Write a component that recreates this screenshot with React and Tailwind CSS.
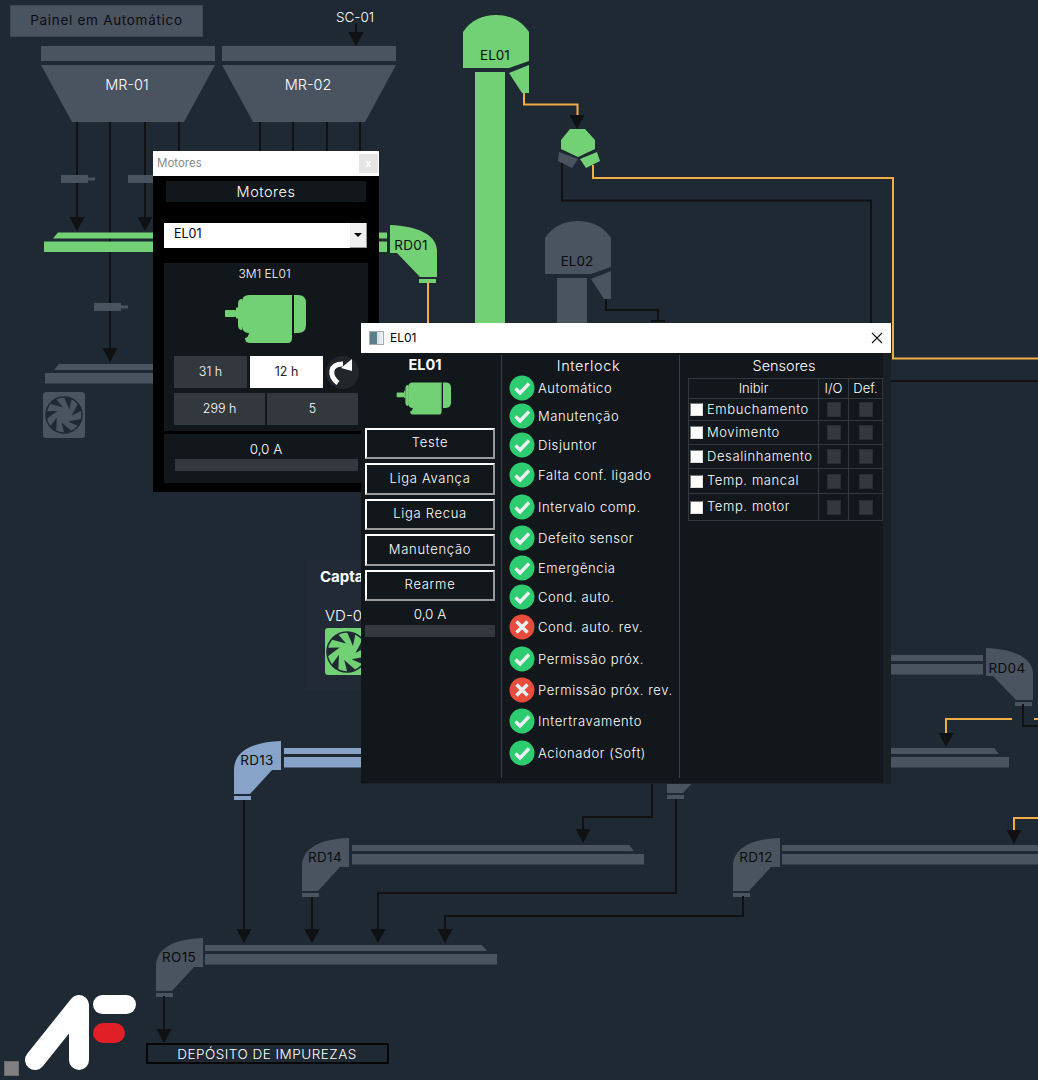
import React from 'react';

const GRAY = '#4a5360';
const GREEN = '#72d175';
const BLUE = '#87a3c7';
const ORANGE = '#f0ad45';
const LINE = '#0f1113';
const FONT = "font-['Inter','Lato',sans-serif] font-light";

// elbow chute, open side left (conveyor comes from the right)
const ElbowLeft = ({ x, y, label, fill }) => (
    <g transform={`translate(${x} ${y})`}>
        <path d="M47 0 V29 H38 L16 53 H0 V29 C0 10 18 1 47 0 Z" fill={fill} />
        <rect x="0" y="55" width="17" height="4" fill={fill} />
        <text x="23" y="24" textAnchor="middle" fontSize="13.5" fontWeight="400" letterSpacing="0.3" fill="#0b0d0f">{label}</text>
    </g>
);

// same chute mirrored, conveyor comes from the left
const ElbowRight = ({ x, y, label, fill }) => (
    <g transform={`translate(${x} ${y})`}>
        <path d="M0 0 V28 H7 L30 52 H47 V26 C47 10 28 1 0 0 Z" fill={fill} />
        <rect x="29" y="54" width="17" height="4" fill={fill} />
        <text x="21" y="25" textAnchor="middle" fontSize="13.5" fontWeight="400" letterSpacing="0.3" fill="#0b0d0f">{label}</text>
    </g>
);

const Elevator = ({ x, y, label, fill, columnEnd }) => (
    <g transform={`translate(${x} ${y})`}>
        <path d="M0 17 C8 5 20 0 33 0 C46 0 58 5 66 17 V46 L46 53 H0 Z" fill={fill} />
        <path d="M46 58 L66 50 V78 H59 Z" fill={fill} />
        <rect x="12" y="57" width="30" height={columnEnd - y - 57} fill={fill} />
        <text x="32" y="45" textAnchor="middle" fontSize="13.5" fontWeight="400" fill="#0b0d0f">{label}</text>
    </g>
);

const Conveyor = ({ x, y, w, fill, slope = 'right' }) => (
    <g fill={fill}>
        {slope === 'right' && <path d={`M${x} ${y} H${x + w - 15} L${x + w - 10} ${y + 6} H${x} Z`} />}
        {slope === 'left' && <path d={`M${x + 14} ${y} H${x + w} V${y + 6} H${x + 9} Z`} />}
        {slope === 'none' && <rect x={x} y={y} width={w} height="6" />}
        <rect x={x} y={y + 9} width={w} height="10.5" />
    </g>
);

const Arrow = ({ x, tip }) => <path d={`M${x - 7.5} ${tip - 14} H${x + 7.5} L${x} ${tip} Z`} fill={LINE} />;

const Wire = ({ d, color = LINE }) => <path d={d} fill="none" stroke={color} strokeWidth="2" />;

const Actuator = ({ x, y }) => (
    <g fill={GRAY}>
        <rect x={x} y={y} width="27" height="8" />
        <rect x={x + 27} y={y + 2.5} width="7" height="3" />
    </g>
);

const FAN_ANGLES = [0, 51.4, 102.8, 154.3, 205.7, 257.1, 308.6];

// dark wedges cut over a light disc
const Fan = ({ cx, cy, r, blade, hub }) => (
    <g transform={`translate(${cx} ${cy})`}>
        <circle r={r} fill={blade} stroke={hub} strokeWidth="1.5" />
        {FAN_ANGLES.map(a => (
            <path
                key={a}
                transform={`rotate(${a})`}
                d={`M0 ${-r} A${r} ${r} 0 0 1 ${r * 0.42} ${-r * 0.906} L${r * 0.3} ${-r * 0.3} Z`}
                fill={hub}
            />
        ))}
    </g>
);

const Diagram = () => (
    <svg className={`absolute inset-0 ${FONT}`} width="1038" height="1080" viewBox="0 0 1038 1080">
        {/* moegas */}
        <rect x="41" y="46" width="174" height="15" fill={GRAY} />
        <path d="M41 65 H215 L184 122 H72 Z" fill={GRAY} />
        <text x="127" y="90" textAnchor="middle" fontSize="14.5" fill="#fff">MR-01</text>
        <rect x="222" y="46" width="174" height="15" fill={GRAY} />
        <path d="M222 65 H396 L365 122 H253 Z" fill={GRAY} />
        <text x="308" y="90" textAnchor="middle" fontSize="14.5" fill="#fff">MR-02</text>

        <text x="355" y="22" textAnchor="middle" fontSize="13.5" fill="#fff">SC-01</text>
        <Wire d="M356 23 V34" />
        <Arrow x={356} tip={46} />

        {/* saidas das moegas */}
        <Wire d="M77 122 V218" />
        <Wire d="M110 122 V350" />
        <Wire d="M145 122 V218" />
        <Wire d="M179 122 V160" />
        <Wire d="M260 122 V160" />
        <Wire d="M293 122 V160" />
        <Wire d="M327 122 V160" />
        <Wire d="M360 122 V160" />
        <Actuator x={61} y={175} />
        <Actuator x={128} y={175} />
        <Actuator x={94} y={303} />
        <Arrow x={77} tip={231} />
        <Arrow x={145} tip={231} />
        <Arrow x={110} tip={362} />

        <Conveyor x={44} y={232.5} w={343} fill={GREEN} slope="left" />
        <ElbowRight x={390} y={225} label="RD01" fill={GREEN} />
        <Wire d="M428 282 V325" color={ORANGE} />

        <Conveyor x={45} y={364} w={200} fill={GRAY} slope="left" />
        <rect x="43" y="392" width="42" height="46" rx="3" fill={GRAY} />
        <Fan cx={64} cy={415} r={18} blade={GRAY} hub="#1f2933" />

        {/* elevadores */}
        <Elevator x={463} y={15} label="EL01" fill={GREEN} columnEnd={325} />
        <Wire d="M524 93 V104.5 H577.5 V116" color={ORANGE} />
        <Arrow x={577} tip={129} />
        <path d="M561 140 L570 129 H585 L595 140 V149 L578 157 L561 149 Z" fill={GREEN} />
        <path d="M559 152 L578 159 L572 168 L558 161 Z" fill={GRAY} />
        <path d="M580 159 L597 152 L600 161 L586 168 Z" fill={GREEN} />
        <Wire d="M562 163 V200.5 H871 V325" />
        <Wire d="M593 165 V178 H893 V358.5 H1038" color={ORANGE} />
        <Wire d="M885 381 H1038" />

        <Elevator x={545} y={221} label="EL02" fill={GRAY} columnEnd={325} />
        <Wire d="M606 299 V310 H658 V322" />
        <path d="M651 320 H665 V322 H651 Z" fill={LINE} />

        {/* captacao, atras da janela */}
        <rect x="305" y="560" width="70" height="130" fill="#222b35" />
        <text x="320" y="582" fontSize="15" fontWeight="700" fill="#fff">Captação</text>
        <text x="325" y="621" fontSize="15" fill="#fff">VD-01</text>
        <rect x="325" y="628" width="47" height="47" rx="3" fill={GREEN} />
        <Fan cx={347} cy={652} r={20} blade={GREEN} hub="#1f2933" />

        {/* transportadores de baixo */}
        <ElbowLeft x={234} y={741} label="RD13" fill={BLUE} />
        <Conveyor x={284} y={748} w={100} fill={BLUE} />
        <Wire d="M244 800 V930" />
        <ElbowLeft x={302} y={838} label="RD14" fill={GRAY} />
        <Conveyor x={352} y={845} w={292} fill={GRAY} />
        <Wire d="M312 897 V930" />
        <ElbowLeft x={733} y={838} label="RD12" fill={GRAY} />
        <Conveyor x={782} y={845} w={270} fill={GRAY} />
        <Wire d="M743 896 V916 H445 V930" />
        <ElbowLeft x={667} y={740} label="" fill={GRAY} />
        <Wire d="M676 799 V893 H378 V930" />
        <Wire d="M652 783 V817 H583 V830" />
        <Arrow x={583} tip={843} />

        <ElbowLeft x={156} y={938} label="RO15" fill={GRAY} />
        <Conveyor x={205} y={945} w={292} fill={GRAY} />
        <Arrow x={244} tip={943} />
        <Arrow x={312} tip={943} />
        <Arrow x={378} tip={943} />
        <Arrow x={445} tip={943} />
        <Wire d="M164 996 V1030" />
        <Arrow x={164} tip={1043} />
        <rect x="147" y="1044" width="241" height="19" fill="none" stroke="#050607" strokeWidth="2" />
        <text x="267" y="1059" textAnchor="middle" fontSize="13.5" letterSpacing="0.5" fill="#fff">DEPÓSITO DE IMPUREZAS</text>

        <ElbowRight x={986} y={648} label="RD04" fill={GRAY} />
        <Conveyor x={860} y={655} w={123} fill={GRAY} slope="none" />
        <Wire d="M1023 704 V726 H1038" />
        <Wire d="M1012 719 H946 V734" color={ORANGE} />
        <Wire d="M1034 719 H1038" color={ORANGE} />
        <Arrow x={946} tip={747} />
        <Conveyor x={860} y={748} w={149} fill={GRAY} />
        <Wire d="M1038 818 H1014 V831" color={ORANGE} />
        <Arrow x={1014} tip={844} />

        {/* logo */}
        <path d="M79 1005 L35 1060 M79 1005 V1060" fill="none" stroke="#fff" strokeWidth="20" strokeLinecap="round" strokeLinejoin="round" />
        <rect x="93" y="995" width="43" height="19" rx="9.5" fill="#fff" />
        <rect x="93" y="1023" width="32" height="20" rx="10" fill="#e11f26" />
        <rect x="4.5" y="1061.5" width="14" height="14" fill="#808080" stroke="#6b6b6b" />
    </svg>
);

const Motor = ({ className }) => (
    <svg className={className} viewBox="0 0 82 48">
        <rect x="1" y="15" width="11" height="7" rx="1" fill={GREEN} />
        <rect x="12" y="12.5" width="2" height="11" fill={GREEN} />
        <path d="M14 9 Q14 4 18 4 V35 Q14 35 14 30 Z" fill={GREEN} />
        <path d="M25 0 H68 V38 H25 Q18 38 18 31 V7 Q18 0 25 0 Z" fill={GREEN} />
        <path d="M70 0 H74 Q82 0 82 8 V30 Q82 38 74 38 H70 Z" fill={GREEN} />
        <path d="M25 38 H68 V43 Q68 48 64 48 H26 Q21 48 21 43 Q24 43 25 38 Z" fill={GREEN} />
    </svg>
);

const Status = ({ ok }) => (
    <svg className="w-[26px] h-[26px] shrink-0" viewBox="0 0 26 26">
        <circle cx="13" cy="13" r="12.5" fill={ok ? '#2ecc71' : '#e74c3c'} />
        {ok
            ? <path d="M6.5 13.5 L11 18 L20 8.5" fill="none" stroke="#ecf0f1" strokeWidth="3.4" />
            : <path d="M7.5 7.5 L18.5 18.5 M18.5 7.5 L7.5 18.5" fill="none" stroke="#ecf0f1" strokeWidth="3.4" />}
    </svg>
);

const interlocks = [
    { label: 'Automático', ok: true, gap: 'mt-[0px]' },
    { label: 'Manutenção', ok: true, gap: 'mt-[2px]' },
    { label: 'Disjuntor', ok: true, gap: 'mt-[3px]' },
    { label: 'Falta conf. ligado', ok: true, gap: 'mt-[4px]' },
    { label: 'Intervalo comp.', ok: true, gap: 'mt-[6px]' },
    { label: 'Defeito sensor', ok: true, gap: 'mt-[5px]' },
    { label: 'Emergência', ok: true, gap: 'mt-[4px]' },
    { label: 'Cond. auto.', ok: true, gap: 'mt-[3px]' },
    { label: 'Cond. auto. rev.', ok: false, gap: 'mt-[4px]' },
    { label: 'Permissão próx.', ok: true, gap: 'mt-[6px]' },
    { label: 'Permissão próx. rev.', ok: false, gap: 'mt-[5px]' },
    { label: 'Intertravamento', ok: true, gap: 'mt-[5px]' },
    { label: 'Acionador (Soft)', ok: true, gap: 'mt-[6px]' },
];

const sensors = [
    { label: 'Embuchamento', row: 'h-[22px]' },
    { label: 'Movimento', row: 'h-[24px]' },
    { label: 'Desalinhamento', row: 'h-[24px]' },
    { label: 'Temp. mancal', row: 'h-[25px]' },
    { label: 'Temp. motor', row: 'h-[26px]' },
];

const actions = ['Teste', 'Liga Avança', 'Liga Recua', 'Manutenção', 'Rearme'];

const MotoresWindow = () => (
    <div className={`absolute left-[153px] top-[151px] w-[226px] h-[341px] bg-black flex flex-col ${FONT}`}>
        <div className="h-[25px] bg-white flex items-center justify-between pl-[4px] pr-[1px] shrink-0">
            <span className="pt-[1px] text-[11.5px] text-[#8a8a8a] font-normal">Motores</span>
            <span className="w-[19px] h-[19px] bg-[#e5e5e5] flex items-center justify-center text-[10px] text-white font-bold">x</span>
        </div>
        <div className="mt-[5px] ml-[13px] w-[200px] h-[21px] bg-[#12171b] flex items-center justify-center text-[14.5px] text-white tracking-[0.5px]">Motores</div>
        <div className="mt-[21px] ml-[11px] w-[203px] h-[25px] bg-white flex items-center justify-between">
            <span className="pl-[10px] pb-[3px] text-[12.5px] text-black font-normal">EL01</span>
            <span className="w-[17px] h-[25px] bg-[#f0f0f0] border-r border-b border-[#999] flex items-center justify-center">
                <span className="w-0 h-0 border-x-[4px] border-x-transparent border-t-[4px] border-t-black" />
            </span>
        </div>
        <div className="mt-[15px] ml-[11px] w-[204px] h-[168px] bg-[#12171b] flex flex-col items-center">
            <div className="mt-[3px] text-[12px] leading-[16px] text-white pr-[3px]">3M1 EL01</div>
            <Motor className="mt-[13px] w-[82px] h-[48px] mr-[3px]" />
            <div className="mt-[13px] self-start ml-[10px] flex gap-[3px] items-start">
                <div className="w-[73px] h-[32px] bg-[#33383f] flex items-center justify-center text-[12.5px] text-white">31 h</div>
                <div className="w-[73px] h-[32px] bg-white flex items-center justify-center text-[12.5px] text-[#222] font-normal">12 h</div>
                <div className="w-[33px] h-[33px] rounded-full bg-[#22262b] flex items-center justify-center">
                    <svg width="33" height="33" viewBox="0 0 33 33">
                        <path d="M12 27 C3 20 3 8 17 8" fill="none" stroke="#fff" strokeWidth="5" />
                        <path d="M26 3 V15 L15 12 Z" fill="#fff" />
                    </svg>
                </div>
            </div>
            <div className="mt-[4px] self-start ml-[10px] flex gap-[2px]">
                <div className="w-[91px] h-[32px] bg-[#33383f] flex items-center justify-center text-[12.5px] text-white">299 h</div>
                <div className="w-[91px] h-[32px] bg-[#33383f] flex items-center justify-center text-[12.5px] text-white">5</div>
            </div>
        </div>
        <div className="mt-[3px] ml-[11px] w-[204px] h-[49px] bg-[#12171b] flex flex-col items-center">
            <div className="mt-[6px] text-[13.5px] leading-[18px] text-white">0,0 A</div>
            <div className="mt-[1px] w-[183px] h-[12px] bg-[#33383f]" />
        </div>
    </div>
);

const El01Window = () => (
    <div className={`absolute left-[361px] top-[323px] w-[530px] h-[461px] bg-[#1b2026] flex flex-col ${FONT}`}>
        <div className="h-[30px] bg-white flex items-center justify-between pl-[8px] pr-[7px] shrink-0">
            <div className="flex items-center gap-[6px]">
                <span className="w-[15px] h-[14px] border border-[#aaa] bg-[linear-gradient(90deg,#5a7f8c_0_50%,#cfdde2_50%,#eef3f5)]" />
                <span className="text-[12px] text-black font-normal">EL01</span>
            </div>
            <svg width="14" height="14" viewBox="0 0 14 14">
                <path d="M2 2 L12 12 M12 2 L2 12" stroke="#111" strokeWidth="1.1" />
            </svg>
        </div>
        <div className="w-[522px] h-[430px] bg-[#12171b] flex">
            <div className="w-[140px] pl-[4px] shrink-0 flex flex-col">
                <div className="w-[130px] text-center mt-[2px] text-[14.5px] leading-[20px] font-bold text-white pr-[10px]">EL01</div>
                <Motor className="mt-[7px] ml-[31px] w-[55px] h-[33px]" />
                <div className="mt-[13px] flex flex-col gap-[4px]">
                    {actions.map(a => (
                        <div key={a} className="w-[130px] h-[31.4px] pb-[1px] border-2 border-t-white border-l-white border-b-[#9a9a9a] border-r-[#9a9a9a] flex items-center justify-center text-[13px] text-white tracking-[0.7px]">{a}</div>
                    ))}
                </div>
                <div className="w-[130px] text-center mt-[4px] text-[13.5px] leading-[18px] text-white">0,0 A</div>
                <div className="mt-[2px] w-[130px] h-[12px] bg-[#33383f]" />
            </div>
            <div className="w-[178px] border-l border-[#3a3f45] mb-[5px] mt-[2px] shrink-0 pl-[7px]">
                <div className="mt-[2px] text-center text-[14.5px] leading-[18px] text-white pr-[11px] tracking-[0.6px]">Interlock</div>
                <div className="flex flex-col">
                    {interlocks.map(i => (
                        <div key={i.label} className={`h-[26px] flex items-center gap-[3px] ${i.gap}`}>
                            <Status ok={i.ok} />
                            <span className="pt-[1px] text-[13px] text-white tracking-[0.6px] whitespace-nowrap">{i.label}</span>
                        </div>
                    ))}
                </div>
            </div>
            <div className="flex-1 border-l border-[#3a3f45] mb-[5px] mt-[2px] pl-[8px]">
                <div className="mt-[2px] text-center text-[14.5px] leading-[18px] text-white pr-[3px]">Sensores</div>
                <div className="mt-[3px] w-[195px] border border-[#33383f] flex flex-col">
                    <div className="h-[20px] flex border-b border-[#33383f] text-[13px] text-white items-center">
                        <span className="w-[129px] text-center">Inibir</span>
                        <span className="w-[30px] h-full border-l border-[#33383f] text-center">I/O</span>
                        <span className="flex-1 h-full border-l border-[#33383f] text-center">Def.</span>
                    </div>
                    {sensors.map(s => (
                        <div key={s.label} className={`${s.row} flex border-b border-[#33383f] last:border-b-0 items-center`}>
                            <div className="w-[129px] flex items-center gap-[4px] pl-[1px]">
                                <span className="w-[13px] h-[13px] bg-white border border-t-[#777] border-l-[#777] border-b-[#ddd] border-r-[#ddd] shrink-0" />
                                <span className="text-[13px] text-white tracking-[0.6px] whitespace-nowrap">{s.label}</span>
                            </div>
                            <div className="w-[30px] h-full border-l border-[#33383f] flex items-center justify-center">
                                <span className="w-[14px] h-[15px] bg-[#33383f] border border-[#2a2e34]" />
                            </div>
                            <div className="flex-1 h-full border-l border-[#33383f] flex items-center justify-center">
                                <span className="w-[14px] h-[15px] bg-[#33383f] border border-[#2a2e34]" />
                            </div>
                        </div>
                    ))}
                </div>
            </div>
        </div>
    </div>
);

export default function App() {
    return (
        <div className={`relative w-[1038px] h-[1080px] overflow-hidden bg-[#1f2933] ${FONT}`}>
            <Diagram />
            <div className="absolute left-[10px] top-[5px] w-[193px] h-[32px] pb-[2px] bg-[#4a5360] border border-[#3f4854] flex items-center justify-center text-[13.5px] text-[#0b0d0f] font-normal tracking-[0.7px]">
                Painel em Automático
            </div>
            <MotoresWindow />
            <El01Window />
        </div>
    );
}
